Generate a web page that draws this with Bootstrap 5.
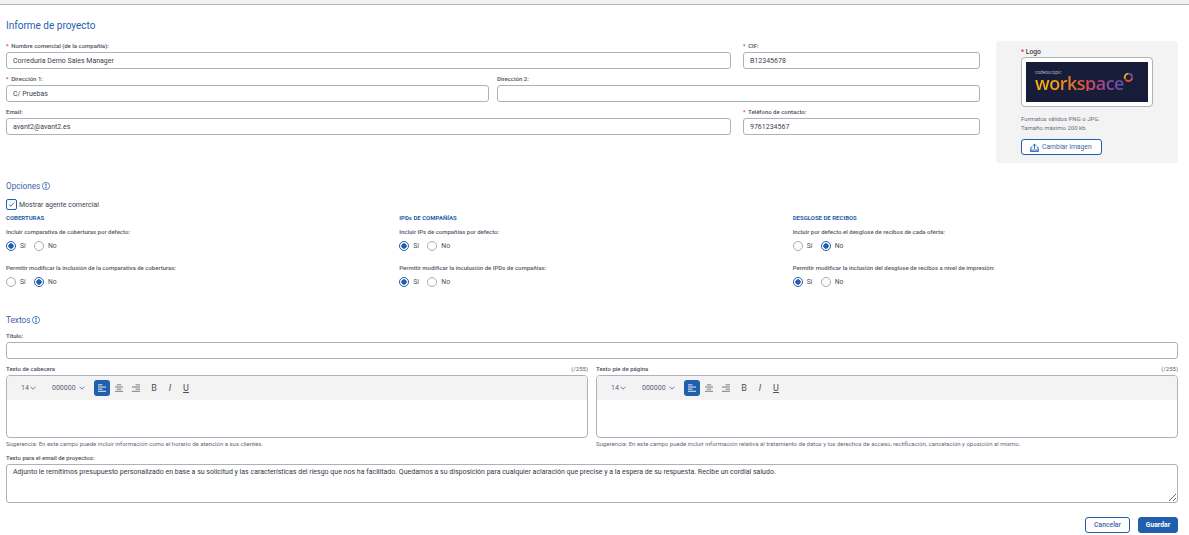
<!DOCTYPE html>
<html lang="es">
<head>
<meta charset="utf-8">
<title>Informe de proyecto</title>
<link rel="stylesheet" href="https://cdn.jsdelivr.net/npm/bootstrap@5.3.0/dist/css/bootstrap.min.css">
<style>
html,body{height:535px;overflow:hidden}
body{font-family:Roboto,"Liberation Sans",sans-serif;color:#444a57;background:#fff}
.topstrip{height:5px;background:#f3f3f3;border-bottom:1px solid #b3b3ba}
.pagewrap{padding:0 11px 0 6px}
.ptitle{font-size:10px;line-height:12px;color:#1f5fae;margin:15px 0 9px;font-weight:400}
.flabel{display:block;font-size:6px;line-height:8px;height:8px;margin:0 0 2px;font-weight:500;color:#4c5160;white-space:nowrap}
.flabel i{font-style:normal;color:#c8373c;margin-right:1px}
.fctl.form-control{height:17px;min-height:0;font-size:7px;line-height:13px;padding:0 6px;border:1px solid #b0b0b8;border-radius:3px;color:#3a3f4a;box-shadow:none}
.leftpane{width:974px;margin-top:1px}
.rowline{margin-bottom:6px}
.rowwide{gap:12px}
.rowhalf{gap:8px}
.w-main{flex:0 0 725px}
.w-side{flex:0 0 237px}
.logopanel{width:182px;height:122px;margin-left:16px;background:#f3f3f3;border-radius:4px;padding:7px 0 0 25px}
.logolabel{font-size:6.8px;line-height:8px;font-weight:500;color:#3c4250;margin-bottom:1px}
.logolabel i{font-style:normal;color:#c8373c}
.logobox{width:132px;height:50px;border:1px solid #b0b0b8;border-radius:4px;background:#fff;padding:4px}
.logoimg{height:40px;background:#171d38;position:relative;overflow:hidden;padding:8px 0 0 9px}
.logosmall{font-family:"Open Sans",sans-serif;font-size:4.4px;line-height:5px;color:#c5c5d2;letter-spacing:.1px}
.logoword{font-family:"Open Sans",sans-serif;font-size:18px;line-height:16px;letter-spacing:-.5px;font-weight:600;background:linear-gradient(90deg,#f2b311 0%,#f3a015 24%,#e8652a 48%,#d8475a 62%,#94479a 80%,#5b50a8 100%);-webkit-background-clip:text;background-clip:text;color:transparent;width:max-content}
.logoring{position:absolute;left:97px;top:10px;width:11px;height:11px}
.hinttxt{font-size:6px;line-height:9px;color:#6a6f7c;margin:7px 0 7px}
.btn.changebtn{display:flex;align-items:center;gap:3px;width:81px;height:16px;padding:0 0 0 8px;font-size:6.8px;line-height:1;color:#3f63a8;background:#fff;border:1px solid #1f5fae;border-radius:3px;font-weight:400}
.sect{font-size:8.2px;line-height:12px;color:#3d5ea6;display:flex;align-items:center;gap:2px;margin:0;font-weight:400}
.sect svg{width:8px;height:8px}
.opthead{margin-top:17px}
.form-check.chk{display:flex;align-items:center;min-height:0;padding:0;margin:6px 0 0;height:12px;gap:2px}
.chk .form-check-input{margin:0;width:11px;height:11px;border:1px solid #1f5fae;border-radius:2px;background-color:#fff;box-shadow:none;
background-image:url("data:image/svg+xml,%3Csvg xmlns='http://www.w3.org/2000/svg' viewBox='0 0 11 11'%3E%3Cpath d='M2.6 5.6l2 2 3.8-4.2' fill='none' stroke='%231f5fae' stroke-width='1.1'/%3E%3C/svg%3E");background-size:100%}
.chk .form-check-label{font-size:7px;line-height:12px;color:#3e4555;padding-top:1px}
.optgrid{display:grid;grid-template-columns:repeat(3,1fr);column-gap:8px;margin-top:4px}
.opthd{font-size:6px;line-height:8px;font-weight:700;color:#1f5fae;margin-bottom:6px}
.optlbl{font-size:6px;line-height:8px;color:#555a68;font-weight:500;margin-bottom:4px}
.radline{display:flex;height:12px;align-items:center;margin-bottom:12px;gap:4px}
.form-check.rad{display:flex;align-items:center;gap:4px;min-height:0;padding:0;margin:0}
.rad .form-check-input{margin:0;width:10px;height:10px;border:1px solid #a9a9b2;background-color:#fff;box-shadow:none;flex:none}
.rad .form-check-input:checked{border-color:#1f5fae;background-color:#fff;background-image:radial-gradient(circle,#1f5fae 0,#1f5fae 2.4px,#fff 3px)}
.rad .form-check-label{font-size:6.8px;line-height:10px;color:#4a4f5c;width:10px}
.txthead{margin-top:14px;margin-bottom:6px}
.titlefield{margin-bottom:6px}
.edgrid{display:grid;grid-template-columns:1fr 1fr;column-gap:8px}
.edtop{display:flex;justify-content:space-between}
.edcount{font-size:6px;line-height:8px;color:#5d6270}
.edbox{height:63px;border:1px solid #b0b0b8;border-radius:4px;overflow:hidden;background:#fff}
.edbar{height:24px;background:#f3f3f3;display:flex;align-items:center;padding-left:14px;color:#4a4f5c;font-size:7px;line-height:1}
.edsel{display:flex;align-items:center;color:#5b6173}
.edsel svg{width:6px;height:4px}
.sel-a{width:31px;gap:1px}
.sel-b{width:42px;gap:3px}
.alignbtn{width:16px;height:16px;display:flex;align-items:center;justify-content:center;border-radius:3px;margin-right:1px}
.alignbtn svg{width:8px;height:8px}
.alignbtn.onbtn{background:#1f5fae}
.fmtbtn{width:16px;text-align:center;font-size:9px;color:#4a4f5c;font-weight:400}
.gap-fmt{width:1px}
.edhint{font-size:6px;line-height:8px;color:#656a77;margin:2px 0 0;white-space:nowrap}
.emaillbl{margin-top:6px}
.emailarea.form-control{height:39px;min-height:0;font-size:7px;line-height:9px;padding:3px 6px;border:1px solid #b0b0b8;border-radius:3px;color:#343944;box-shadow:none;resize:vertical}
.footbar{margin-top:14px;gap:8px}
.btn.fbtn{height:16px;padding:0;font-size:6.8px;line-height:1;border-radius:3px;border:1px solid #1f5fae;font-weight:500}
.btn.f-cancel{width:45px;color:#3f63a8;background:#fff}
.btn.f-save{width:40px;color:#fff;background:#1f5fae;font-weight:700}
</style>
</head>
<body>
<div class="topstrip"></div>
<main class="pagewrap">
  <h1 class="ptitle">Informe de proyecto</h1>
  <div class="d-flex align-items-start">
    <div class="leftpane">
      <div class="d-flex rowline rowwide">
        <div class="w-main"><label class="flabel"><i>*</i> Nombre comercial (de la compañía):</label><input class="form-control fctl" value="Correduria Demo Sales Manager"></div>
        <div class="w-side"><label class="flabel"><i>*</i> CIF:</label><input class="form-control fctl" value="B12345678"></div>
      </div>
      <div class="d-flex rowline rowhalf">
        <div class="flex-fill w-50"><label class="flabel"><i>*</i> Dirección 1:</label><input class="form-control fctl" value="C/ Pruebas"></div>
        <div class="flex-fill w-50"><label class="flabel">Dirección 2:</label><input class="form-control fctl" value=""></div>
      </div>
      <div class="d-flex rowwide">
        <div class="w-main"><label class="flabel">Email:</label><input class="form-control fctl" value="avant2@avant2.es"></div>
        <div class="w-side"><label class="flabel"><i>*</i> Teléfono de contacto:</label><input class="form-control fctl" value="9761234567"></div>
      </div>
    </div>
    <aside class="logopanel">
      <div class="logolabel"><i>*</i> Logo</div>
      <div class="logobox">
        <div class="logoimg">
          <div class="logosmall">codeoscopic</div>
          <div class="logoword">workspace</div>
          <svg class="logoring" viewBox="0 0 12 12"><path d="M2.2 7.4A4 4 0 0 1 6 1.8" fill="none" stroke="#f2a51c" stroke-width="2"/><path d="M6 1.8a4.2 4.2 0 0 1 4 3.6" fill="none" stroke="#6a4fb0" stroke-width="2"/><path d="M10 6a4 4 0 0 1-7.4 2" fill="none" stroke="#e0503a" stroke-width="2"/></svg>
        </div>
      </div>
      <p class="hinttxt">Formatos válidos PNG o JPG.<br>Tamaño máximo 200 kb.</p>
      <button type="button" class="btn changebtn">
        <svg width="9" height="9" viewBox="0 0 10 10"><path d="M5 6.5V1.2M3 3.2l2-2 2 2" fill="none" stroke="#1f5fae" stroke-width="1"/><path d="M2.6 4.6H1.2L.5 9.4h9l-.7-4.8H7.4" fill="none" stroke="#1f5fae" stroke-width="1"/><path d="M.5 7.8h9" stroke="#1f5fae" stroke-width="1"/></svg>
        Cambiar imagen
      </button>
    </aside>
  </div>

  <h2 class="sect opthead">Opciones
    <svg viewBox="0 0 8 8"><circle cx="4" cy="4" r="3.6" fill="none" stroke="#1f5fae" stroke-width=".7"/><path d="M3 2.2h2M4 2.2v3.6M3.2 5.8h1.6" fill="none" stroke="#1f5fae" stroke-width=".7"/></svg>
  </h2>
  <div class="form-check chk">
    <input class="form-check-input" type="checkbox" id="mag" checked>
    <label class="form-check-label" for="mag">Mostrar agente comercial</label>
  </div>
  <div class="optgrid">
    <section>
      <div class="opthd">COBERTURAS</div>
      <div class="optlbl">Incluir comparativa de coberturas por defecto:</div>
      <div class="radline">
        <div class="form-check rad"><input class="form-check-input" type="radio" name="a1" checked><label class="form-check-label">Sí</label></div>
        <div class="form-check rad"><input class="form-check-input" type="radio" name="a1"><label class="form-check-label">No</label></div>
      </div>
      <div class="optlbl">Permitir modificar la inclusión de la comparativa de coberturas:</div>
      <div class="radline">
        <div class="form-check rad"><input class="form-check-input" type="radio" name="a2"><label class="form-check-label">Sí</label></div>
        <div class="form-check rad"><input class="form-check-input" type="radio" name="a2" checked><label class="form-check-label">No</label></div>
      </div>
    </section>
    <section>
      <div class="opthd">IPDs DE COMPAÑÍAS</div>
      <div class="optlbl">Incluir IPs de compañías por defecto:</div>
      <div class="radline">
        <div class="form-check rad"><input class="form-check-input" type="radio" name="b1" checked><label class="form-check-label">Sí</label></div>
        <div class="form-check rad"><input class="form-check-input" type="radio" name="b1"><label class="form-check-label">No</label></div>
      </div>
      <div class="optlbl">Permitir modificar la inculusión de IPDs de compañías:</div>
      <div class="radline">
        <div class="form-check rad"><input class="form-check-input" type="radio" name="b2" checked><label class="form-check-label">Sí</label></div>
        <div class="form-check rad"><input class="form-check-input" type="radio" name="b2"><label class="form-check-label">No</label></div>
      </div>
    </section>
    <section>
      <div class="opthd">DESGLOSE DE RECIBOS</div>
      <div class="optlbl">Incluir por defecto el desglose de recibos de cada oferta:</div>
      <div class="radline">
        <div class="form-check rad"><input class="form-check-input" type="radio" name="c1"><label class="form-check-label">Sí</label></div>
        <div class="form-check rad"><input class="form-check-input" type="radio" name="c1" checked><label class="form-check-label">No</label></div>
      </div>
      <div class="optlbl">Permitir modificar la inclusión del desglose de recibos a nivel de impresión:</div>
      <div class="radline">
        <div class="form-check rad"><input class="form-check-input" type="radio" name="c2" checked><label class="form-check-label">Sí</label></div>
        <div class="form-check rad"><input class="form-check-input" type="radio" name="c2"><label class="form-check-label">No</label></div>
      </div>
    </section>
  </div>

  <h2 class="sect txthead">Textos
    <svg viewBox="0 0 8 8"><circle cx="4" cy="4" r="3.6" fill="none" stroke="#1f5fae" stroke-width=".7"/><path d="M3 2.2h2M4 2.2v3.6M3.2 5.8h1.6" fill="none" stroke="#1f5fae" stroke-width=".7"/></svg>
  </h2>
  <div class="titlefield">
    <label class="flabel">Título:</label>
    <input class="form-control fctl" value="">
  </div>
  <div class="edgrid">
    <div>
      <div class="edtop"><label class="flabel">Texto de cabecera</label><span class="edcount">(/255)</span></div>
      <div class="edbox">
        <div class="edbar">
          <span class="edsel sel-a">14<svg viewBox="0 0 6 4"><path d="M.5.7 3 3.2 5.5.7" fill="none" stroke="#3d5ea6" stroke-width=".8"/></svg></span>
          <span class="edsel sel-b">000000<svg viewBox="0 0 6 4"><path d="M.5.7 3 3.2 5.5.7" fill="none" stroke="#3d5ea6" stroke-width=".8"/></svg></span>
          <span class="alignbtn onbtn"><svg viewBox="0 0 9 9"><path d="M0 1h5M0 3.4h9M0 5.8h5M0 8.2h9" stroke="#fff" stroke-width="1"/></svg></span>
          <span class="alignbtn"><svg viewBox="0 0 9 9"><path d="M2 1h5M0 3.4h9M2 5.8h5M0 8.2h9" stroke="#666b78" stroke-width="1"/></svg></span>
          <span class="alignbtn"><svg viewBox="0 0 9 9"><path d="M4 1h5M0 3.4h9M4 5.8h5M0 8.2h9" stroke="#666b78" stroke-width="1"/></svg></span>
          <span class="gap-fmt"></span>
          <span class="fmtbtn">B</span><span class="fmtbtn fst-italic">I</span><span class="fmtbtn text-decoration-underline">U</span>
        </div>
      </div>
      <p class="edhint">Sugerencia: En este campo puede incluir información como el horario de atención a sus clientes.</p>
    </div>
    <div>
      <div class="edtop"><label class="flabel">Texto pie de página</label><span class="edcount">(/255)</span></div>
      <div class="edbox">
        <div class="edbar">
          <span class="edsel sel-a">14<svg viewBox="0 0 6 4"><path d="M.5.7 3 3.2 5.5.7" fill="none" stroke="#3d5ea6" stroke-width=".8"/></svg></span>
          <span class="edsel sel-b">000000<svg viewBox="0 0 6 4"><path d="M.5.7 3 3.2 5.5.7" fill="none" stroke="#3d5ea6" stroke-width=".8"/></svg></span>
          <span class="alignbtn onbtn"><svg viewBox="0 0 9 9"><path d="M0 1h5M0 3.4h9M0 5.8h5M0 8.2h9" stroke="#fff" stroke-width="1"/></svg></span>
          <span class="alignbtn"><svg viewBox="0 0 9 9"><path d="M2 1h5M0 3.4h9M2 5.8h5M0 8.2h9" stroke="#666b78" stroke-width="1"/></svg></span>
          <span class="alignbtn"><svg viewBox="0 0 9 9"><path d="M4 1h5M0 3.4h9M4 5.8h5M0 8.2h9" stroke="#666b78" stroke-width="1"/></svg></span>
          <span class="gap-fmt"></span>
          <span class="fmtbtn">B</span><span class="fmtbtn fst-italic">I</span><span class="fmtbtn text-decoration-underline">U</span>
        </div>
      </div>
      <p class="edhint">Sugerencia: En este campo puede incluir información relativa al tratamiento de datos y los derechos de acceso, rectificación, cancelación y oposición al mismo.</p>
    </div>
  </div>
  <label class="flabel emaillbl">Texto para el email de proyectos:</label>
  <textarea class="form-control emailarea">Adjunto le remitimos presupuesto personalizado en base a su solicitud y las características del riesgo que nos ha facilitado. Quedamos a su disposición para cualquier aclaración que precise y a la espera de su respuesta. Recibe un cordial saludo.</textarea>
  <div class="d-flex justify-content-end footbar">
    <button type="button" class="btn fbtn f-cancel">Cancelar</button>
    <button type="button" class="btn fbtn f-save">Guardar</button>
  </div>
</main>
<script src="https://cdn.jsdelivr.net/npm/bootstrap@5.3.0/dist/js/bootstrap.bundle.min.js"></script>
</body>
</html>
